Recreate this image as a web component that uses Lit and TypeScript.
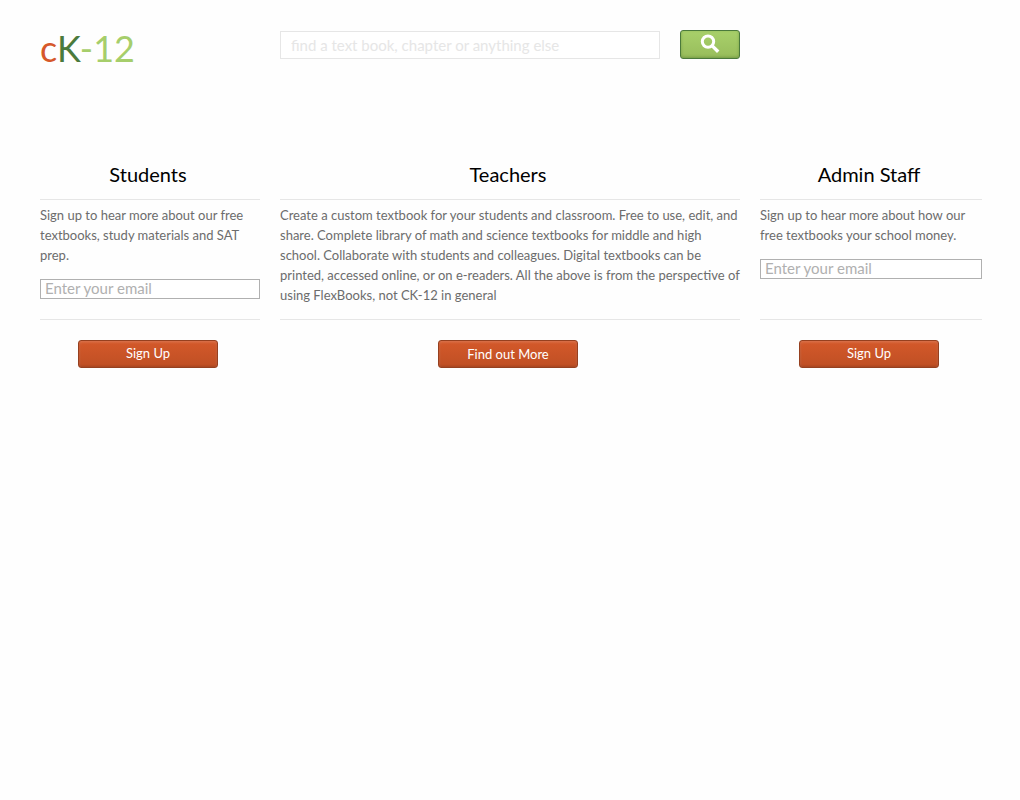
import { LitElement, html, css } from "lit";
import { customElement } from "lit/decorators.js";

@customElement("app-root")
export class AppRoot extends LitElement {
  static styles = css`
    :host {
      display: block;
      min-height: 100vh;
      box-sizing: border-box;
      padding: 30px 38px 30px 40px;
      background: #fefefe;
      color: #6c6c6c;
      font: 13px/20px Lato, "Open Sans", sans-serif;
    }
    *,
    *::before {
      box-sizing: border-box;
    }
    .grid {
      display: grid;
      grid-template-columns: 220fr 460fr 222fr;
      column-gap: 20px;
    }
    .logo {
      height: 36px;
      font-size: 36px;
      line-height: 36px;
      color: #a6ce6b;
      text-decoration: none;
    }
    .logo .c {
      color: #d6582b;
    }
    .logo .k {
      color: #4b7a3c;
    }
    .search {
      display: flex;
      align-items: flex-start;
      gap: 20px;
    }
    input {
      min-width: 0;
      margin: 0;
      border: 1px solid #b0b0b0;
      border-radius: 0;
      background: #fff;
      color: #555;
      font: 15px/16px Lato, "Open Sans", sans-serif;
    }
    input::placeholder {
      color: #b0b0b0;
      opacity: 1;
    }
    .query {
      flex: 1;
      height: 28px;
      margin-top: 1px;
      padding: 0 10px;
      border-color: #e6e6e6;
    }
    .query::placeholder {
      color: #e6e6e6;
    }
    button {
      height: 28px;
      padding: 0;
      border: 1px solid #96401f;
      border-radius: 3px;
      background: linear-gradient(#d4592a, #bf4f24);
      box-shadow: inset 0 1px 3px rgba(255, 255, 255, 0.2),
        inset 0 -1px 2px rgba(80, 20, 0, 0.25);
      color: #fff;
      font: inherit;
      cursor: pointer;
    }
    .go {
      width: 60px;
      height: 29px;
      border-color: #4b7a3c;
      background: linear-gradient(#a8d06a, #98bd5c);
      box-shadow: inset 0 -1px 3px rgba(50, 90, 30, 0.35);
    }
    .go svg {
      display: block;
      margin: 0 auto 2px;
    }
    main {
      margin-top: 84px;
    }
    section {
      display: flex;
      flex-direction: column;
    }
    h2 {
      margin: 0;
      padding: 12px 4px 13px 0;
      color: #000;
      font-size: 20px;
      line-height: 24px;
      font-weight: 400;
      text-align: center;
    }
    .body {
      flex: 1;
      padding: 5px 0 14px;
      border: solid #e6e6e6;
      border-width: 1px 0;
    }
    p {
      margin: 0;
    }
    .email {
      display: block;
      width: 100%;
      height: 20px;
      margin-top: 14px;
      padding: 0 4px 2px;
    }
    .actions {
      padding: 20px 4px 0 0;
      text-align: center;
    }
    .actions button {
      width: 140px;
      vertical-align: top;
    }
    .actions .join {
      padding-bottom: 3px;
    }
  `;

  render() {
    return html`
      <header class="grid">
        <a class="logo" href="#" aria-label="cK-12"
          ><span class="c">c</span><span class="k">K</span>-12</a
        >
        <form class="search" @submit=${(e: Event) => e.preventDefault()}>
          <input
            class="query"
            type="text"
            aria-label="Search"
            placeholder="find a text book, chapter or anything else"
          />
          <button class="go" aria-label="Search">
            <svg width="22" height="22" viewBox="0 0 22 22" fill="none" stroke="#fff">
              <circle cx="9" cy="8.6" r="5.7" stroke-width="3" />
              <path d="M13 12.6 L19.2 18.8" stroke-width="3.4" />
            </svg>
          </button>
        </form>
      </header>
      <main class="grid">
        <section>
          <h2>Students</h2>
          <div class="body">
            <p>Sign up to hear more about our free textbooks, study materials and SAT prep.</p>
            <input class="email" type="email" aria-label="Student email" placeholder="Enter your email" />
          </div>
          <div class="actions"><button class="join">Sign Up</button></div>
        </section>
        <section>
          <h2>Teachers</h2>
          <div class="body">
            <p>
              Create a custom textbook for your students and classroom. Free to use, edit, and
              share. Complete library of math and science textbooks for middle and high school.
              Collaborate with students and colleagues. Digital textbooks can be printed, accessed
              online, or on e-readers. All the above is from the perspective of using FlexBooks,
              not CK-12 in general
            </p>
          </div>
          <div class="actions"><button>Find out More</button></div>
        </section>
        <section>
          <h2>Admin Staff</h2>
          <div class="body">
            <p>Sign up to hear more about how our free textbooks your school money.</p>
            <input class="email" type="email" aria-label="Staff email" placeholder="Enter your email" />
          </div>
          <div class="actions"><button class="join">Sign Up</button></div>
        </section>
      </main>
    `;
  }
}
